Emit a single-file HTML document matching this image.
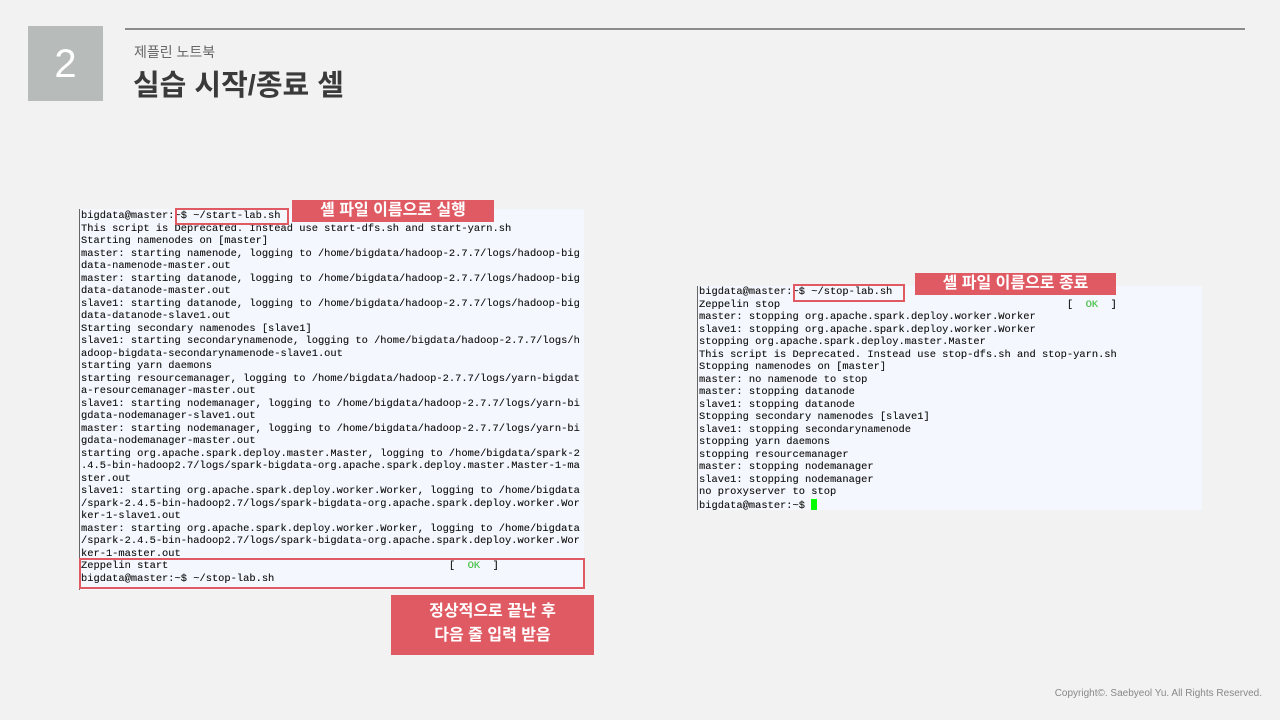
<!DOCTYPE html>
<html><head><meta charset="utf-8"><style>
body{margin:0;width:1280px;height:720px;background:#f2f2f2;position:relative;overflow:hidden;font-family:"Liberation Sans","Noto Sans CJK KR",sans-serif}
.num{position:absolute;left:28px;top:26px;width:75px;height:75px;background:#b7bbb9;color:#fff;font-size:40px;text-align:center;line-height:77px}
.hr{position:absolute;left:125px;top:28px;width:1120px;height:2px;background:#8c8c8c}
.sub{position:absolute;left:134px;top:42px;font-size:14px;color:#666}
.title{position:absolute;left:133px;top:62px;font-size:29px;font-weight:bold;color:#3a3a3a}
.term{position:absolute;background:#f4f7fd;border-left:1px solid #666;font-family:"Liberation Mono",monospace;font-size:10.4px;line-height:12.5px;white-space:pre;color:#1a1a1a;padding-left:1px;text-shadow:0 0 0.3px #333}
.box{position:absolute;border:2px solid #e05a63;box-sizing:border-box}
.lab{position:absolute;background:#e05a63;color:#fff;font-weight:bold;text-align:center;box-sizing:border-box}
.ok{color:#4ddb4d}
.cur{display:inline-block;width:6px;height:11px;background:#0f0;vertical-align:-2px}
.copy{position:absolute;right:18px;top:688px;font-size:10px;color:#888}
</style></head><body>
<div class="num">2</div>
<div class="hr"></div>
<div class="sub">제플린 노트북</div>
<div class="title">실습 시작/종료 셀</div>

<div class="term" style="left:79px;top:209px;width:503px;height:380px;padding-top:1px">bigdata@master:~$ ~/start-lab.sh
This script is Deprecated. Instead use start-dfs.sh and start-yarn.sh
Starting namenodes on [master]
master: starting namenode, logging to /home/bigdata/hadoop-2.7.7/logs/hadoop-big
data-namenode-master.out
master: starting datanode, logging to /home/bigdata/hadoop-2.7.7/logs/hadoop-big
data-datanode-master.out
slave1: starting datanode, logging to /home/bigdata/hadoop-2.7.7/logs/hadoop-big
data-datanode-slave1.out
Starting secondary namenodes [slave1]
slave1: starting secondarynamenode, logging to /home/bigdata/hadoop-2.7.7/logs/h
adoop-bigdata-secondarynamenode-slave1.out
starting yarn daemons
starting resourcemanager, logging to /home/bigdata/hadoop-2.7.7/logs/yarn-bigdat
a-resourcemanager-master.out
slave1: starting nodemanager, logging to /home/bigdata/hadoop-2.7.7/logs/yarn-bi
gdata-nodemanager-slave1.out
master: starting nodemanager, logging to /home/bigdata/hadoop-2.7.7/logs/yarn-bi
gdata-nodemanager-master.out
starting org.apache.spark.deploy.master.Master, logging to /home/bigdata/spark-2
.4.5-bin-hadoop2.7/logs/spark-bigdata-org.apache.spark.deploy.master.Master-1-ma
ster.out
slave1: starting org.apache.spark.deploy.worker.Worker, logging to /home/bigdata
/spark-2.4.5-bin-hadoop2.7/logs/spark-bigdata-org.apache.spark.deploy.worker.Wor
ker-1-slave1.out
master: starting org.apache.spark.deploy.worker.Worker, logging to /home/bigdata
/spark-2.4.5-bin-hadoop2.7/logs/spark-bigdata-org.apache.spark.deploy.worker.Wor
ker-1-master.out
Zeppelin start                                             [  <span class="ok">OK</span>  ]
bigdata@master:~$ ~/stop-lab.sh</div>
<div class="box" style="left:175px;top:208px;width:114px;height:17px"></div>
<div class="lab" style="left:292px;top:200px;width:202px;height:22px;font-size:16px;line-height:22px">셸 파일 이름으로 실행</div>
<div class="box" style="left:79px;top:558px;width:506px;height:31px"></div>
<div class="lab" style="left:391px;top:595px;width:203px;height:60px;font-size:16px;line-height:24px;padding-top:5px">정상적으로 끝난 후<br>다음 줄 입력 받음</div>

<div class="term" style="left:697px;top:286px;width:503px;height:224px">bigdata@master:~$ ~/stop-lab.sh
Zeppelin stop                                              [  <span class="ok">OK</span>  ]
master: stopping org.apache.spark.deploy.worker.Worker
slave1: stopping org.apache.spark.deploy.worker.Worker
stopping org.apache.spark.deploy.master.Master
This script is Deprecated. Instead use stop-dfs.sh and stop-yarn.sh
Stopping namenodes on [master]
master: no namenode to stop
master: stopping datanode
slave1: stopping datanode
Stopping secondary namenodes [slave1]
slave1: stopping secondarynamenode
stopping yarn daemons
stopping resourcemanager
master: stopping nodemanager
slave1: stopping nodemanager
no proxyserver to stop
bigdata@master:~$ <span class="cur"></span></div>
<div class="box" style="left:793px;top:284px;width:112px;height:18px"></div>
<div class="lab" style="left:915px;top:273px;width:201px;height:22px;font-size:16px;line-height:22px">셸 파일 이름으로 종료</div>

<div class="copy">Copyright©. Saebyeol Yu. All Rights Reserved.</div>
</body></html>
